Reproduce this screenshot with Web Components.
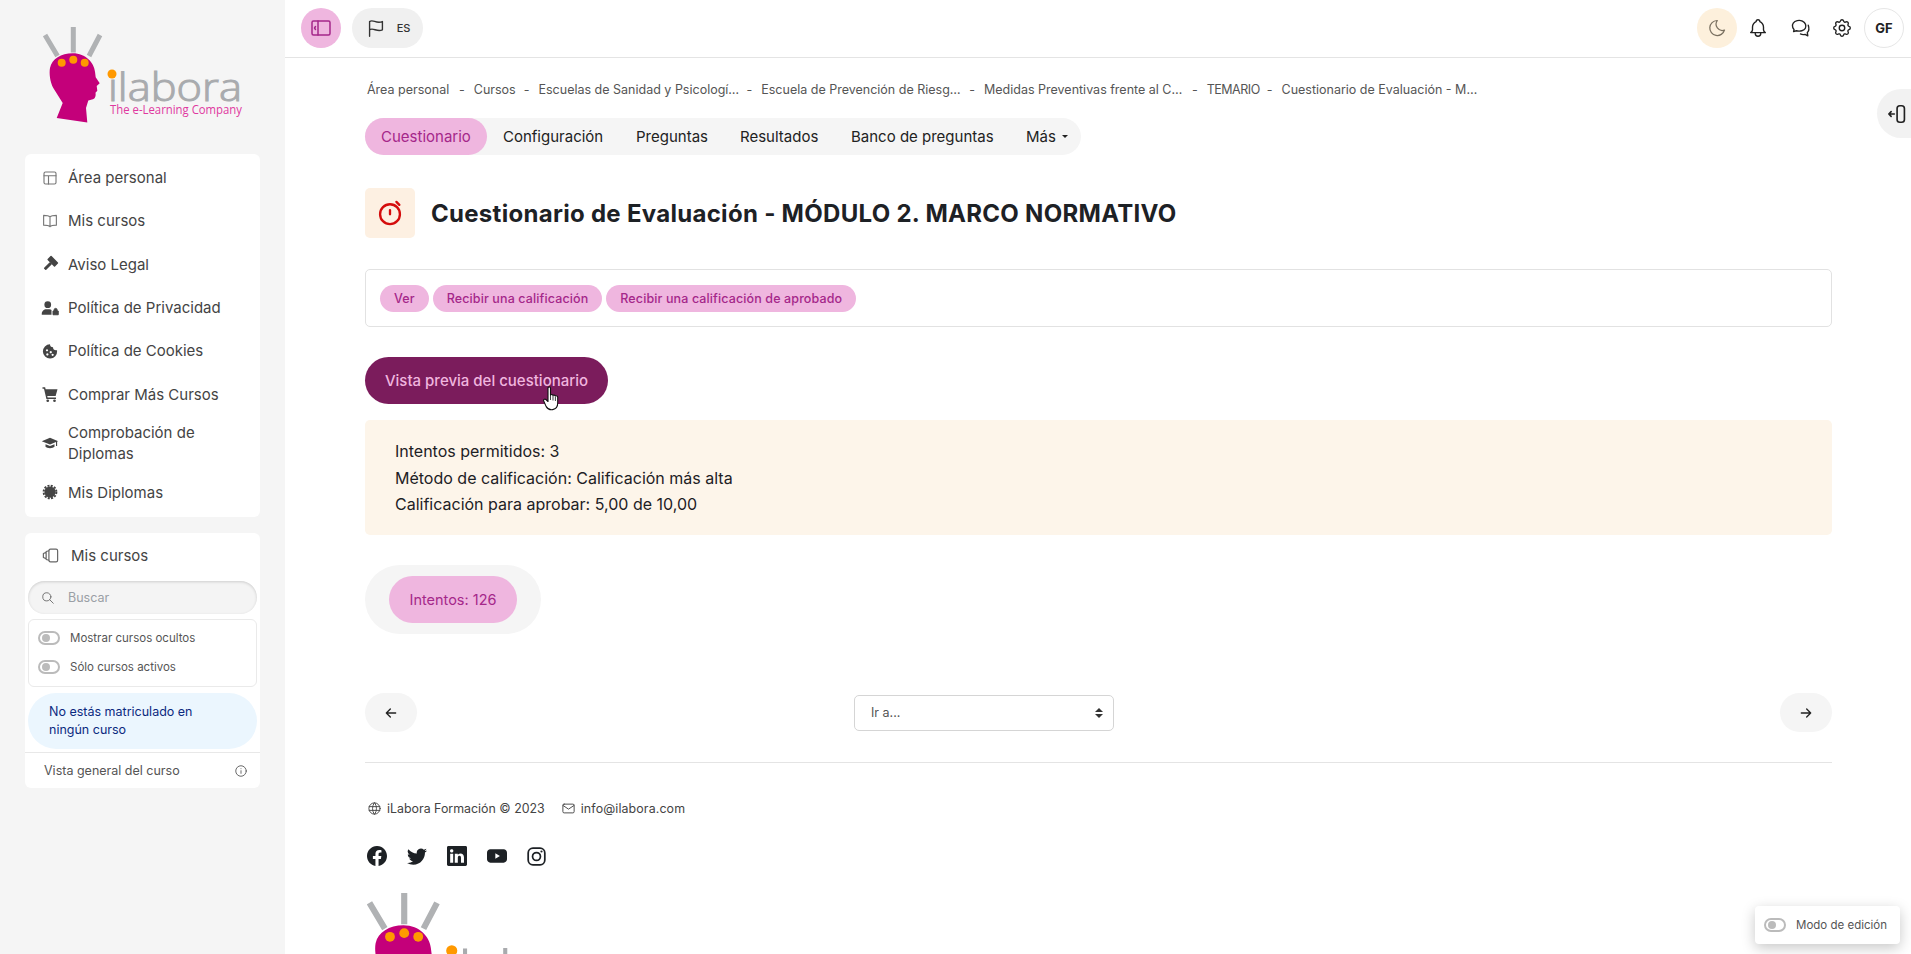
<!DOCTYPE html>
<html lang="es">
<head>
<meta charset="utf-8">
<title>Cuestionario de Evaluación</title>
<style>
	html, body {
		margin: 0;
		height: 100%;
		overflow: hidden;
		background: #fff;
		font-family: Inter, "Liberation Sans", sans-serif;
		color: #1d2125;
	}
</style>
</head>
<body>
<il-app></il-app>

<script>
const ICONS = {
	layout: '<g class="s"><rect x="4" y="4" width="16" height="16" rx="2"/><path d="M4 9h16M10 9v11"/></g>',
	book: '<g class="s"><path d="M12 6.5C10.5 5 8 4.5 3.5 4.5v13c4.5 0 7 .5 8.500 2 1.500-1.500 4-2 8.500-2v-13C16 4.500 13.500 5 12 6.500zM12 6.500v13"/></g>',
	gavel: '<g transform="rotate(45 12 12)"><rect x="5" y="3" width="14" height="7.500" rx="1"/><rect x="10" y="10" width="4" height="12" rx="1"/></g>',
	userlock: '<circle cx="9" cy="7.500" r="4.500"/><path d="M1 21v-1.500C1 16 4 13.500 7 13.500h4c1.500 0 2.500.5 3 1V21z"/><path d="M16 21v-5h7v5zM17.500 16v-1.500a2 2 0 0 1 4 0V16" stroke="currentColor" stroke-width="1.300"/>',
	cookie: '<path fill-rule="evenodd" d="M12 3a4 4 0 0 0 4 4 4 4 0 0 0 4 4c1 0 1.500 0 1.500 1A9.500 9.500 0 1 1 12 3zM8 9.500a1.500 1.500 0 1 0 .01 0zM8.500 15a1.500 1.500 0 1 0 .01 0zM13 12a1.500 1.500 0 1 0 .01 0zM15.500 15.500a1.500 1.500 0 1 0 .01 0z"/>',
	cart: '<path d="M2 3h3.500l.7 2.500H22l-2.500 9H8.300l.5 2H20v2H7.200L4 5H2z"/><circle cx="9" cy="21" r="1.800"/><circle cx="18" cy="21" r="1.800"/>',
	cap: '<path d="M12 5 1 9.500 12 14l8-3.300V16h1.500V10L23 9.500zM6 13.500V17c2 2.500 10 2.500 12 0v-3.500L12 16z"/>',
	cert: '<circle cx="12" cy="12" r="7.500"/><circle cx="12" cy="12" r="8.500" fill="none" stroke="currentColor" stroke-width="2.600" stroke-dasharray="2.700 1.750"/>',
	books: '<g class="s"><rect x="10" y="4" width="11" height="16" rx="2"/><path d="M10 6 6.500 7v10l3.500 1M6.500 8 3 9.500v5L6.500 16"/></g>',
	search: '<g class="s"><circle cx="10" cy="10" r="7"/><path d="m21 21-6-6"/></g>',
	info: '<g class="s"><circle cx="12" cy="12" r="9"/><path d="M12 8h.01M12 11.500V16"/></g>',
	sidebar: '<g class="s"><rect x="3" y="5" width="18" height="14" rx="1.500"/><path d="M9 5v14M6.500 10.500 5.500 12l1 1.500"/></g>',
	flag: '<g class="s"><path d="M5 21V5c4-3 7 3 14 0v9c-6 3-10-3-14 0"/></g>',
	moon: '<g class="s"><path d="M12 3h.4A7.500 7.500 0 0 0 21 14.500 9 9 0 1 1 12 3z"/></g>',
	bell: '<g class="s"><path d="M10 5a2 2 0 1 1 4 0 7 7 0 0 1 4 6v3a4 4 0 0 0 2 3H4a4 4 0 0 0 2-3v-3a7 7 0 0 1 4-6M9 17v1a3 3 0 0 0 6 0v-1"/></g>',
	chat: '<g class="s"><path d="M14 15c4-1 5-4 4-7s-5-5-9-4-6 4-5 7c.3 1.300 1 2 1.500 2.700L5 16l3-1c2 .6 4 .6 6 0z"/><path d="M21 9c1 3 1 6-1 8l.5 3.500-3-1.500c-2 .5-3.500.3-5-.5"/></g>',
	gear: '<g class="s"><path d="M10.300 4.300c.4-1.800 3-1.800 3.400 0a1.700 1.700 0 0 0 2.600 1.100c1.500-.9 3.300.8 2.400 2.400a1.700 1.700 0 0 0 1 2.500c1.800.4 1.800 3 0 3.400a1.700 1.700 0 0 0-1 2.600c.9 1.500-.9 3.300-2.400 2.400a1.700 1.700 0 0 0-2.600 1c-.4 1.800-3 1.800-3.400 0a1.700 1.700 0 0 0-2.600-1c-1.500.9-3.300-.9-2.400-2.400a1.700 1.700 0 0 0-1-2.600c-1.800-.4-1.800-3 0-3.400a1.700 1.700 0 0 0 1-2.500c-.9-1.600.9-3.300 2.400-2.400 1 .6 2.300.1 2.600-1.100z"/><circle cx="12" cy="12" r="3"/></g>',
	drawer: '<g class="s"><rect x="11" y="3" width="8" height="18" rx="3"/><path d="M8 12H2M4.500 9.500 2 12l2.500 2.500"/></g>',
	timer: '<g class="s"><circle cx="12" cy="13" r="8.500"/><path d="M12 9.500V13M17.500 2.500l2.500 2.500"/></g>',
	left: '<g class="s"><path d="M5 12h14M5 12l6 6M5 12l6-6"/></g>',
	right: '<g class="s"><path d="M5 12h14M19 12l-6 6M19 12l-6-6"/></g>',
	globe: '<g class="s"><circle cx="12" cy="12" r="9"/><path d="M3.600 9h16.800M3.600 15h16.800M11.500 3a17 17 0 0 0 0 18M12.500 3a17 17 0 0 1 0 18"/></g>',
	mail: '<g class="s"><rect x="3" y="5" width="18" height="14" rx="2"/><path d="m3 7 9 6 9-6"/></g>',
	facebook: '<path transform="scale(1.500)" d="M16 8.049c0-4.446-3.582-8.05-8-8.05C3.580 0-.002 3.603-.002 8.050c0 4.017 2.926 7.347 6.750 7.950v-5.625h-2.030V8.050H6.750V6.275c0-2.017 1.195-3.131 3.022-3.131.876 0 1.791.157 1.791.157v1.980h-1.009c-.993 0-1.303.621-1.303 1.258v1.510h2.218l-.354 2.326H9.250V16c3.824-.604 6.750-3.934 6.750-7.951z"/>',
	twitter: '<path transform="scale(1.500)" d="M5.026 15c6.038 0 9.341-5.003 9.341-9.334 0-.14 0-.282-.006-.422A6.685 6.685 0 0 0 16 3.542a6.658 6.658 0 0 1-1.889.518 3.301 3.301 0 0 0 1.447-1.817 6.533 6.533 0 0 1-2.087.793A3.286 3.286 0 0 0 7.875 6.030a9.325 9.325 0 0 1-6.767-3.429 3.289 3.289 0 0 0 1.018 4.382A3.323 3.323 0 0 1 .64 6.575v.045a3.288 3.288 0 0 0 2.632 3.218 3.203 3.203 0 0 1-.865.115 3.230 3.230 0 0 1-.614-.057 3.283 3.283 0 0 0 3.067 2.277A6.588 6.588 0 0 1 .78 13.580a6.320 6.320 0 0 1-.78-.045A9.344 9.344 0 0 0 5.026 15z"/>',
	linkedin: '<path transform="scale(1.500)" d="M0 1.146C0 .513.526 0 1.175 0h13.650C15.474 0 16 .513 16 1.146v13.708c0 .633-.526 1.146-1.175 1.146H1.175C.526 16 0 15.487 0 14.854V1.146zm4.943 12.248V6.169H2.542v7.225h2.401zm-1.200-8.212c.837 0 1.358-.554 1.358-1.248-.015-.709-.52-1.248-1.342-1.248-.822 0-1.359.54-1.359 1.248 0 .694.521 1.248 1.327 1.248h.016zm4.908 8.212V9.359c0-.216.016-.432.08-.586.173-.431.568-.878 1.232-.878.869 0 1.216.662 1.216 1.634v3.865h2.401V9.250c0-2.220-1.184-3.252-2.764-3.252-1.274 0-1.845.7-2.165 1.193v.025h-.016a5.540 5.540 0 0 1 .016-.025V6.169h-2.400c.03.678 0 7.225 0 7.225h2.400z"/>',
	youtube: '<path fill-rule="evenodd" d="M4 4h16c2.200 0 4 1.800 4 4v8c0 2.200-1.800 4-4 4H4c-2.200 0-4-1.800-4-4V8c0-2.200 1.800-4 4-4zm6 4.800v6.400l5.500-3.200z"/>',
	instagram: '<g class="s" style="stroke-width:2.200"><rect x="1.500" y="1.500" width="21" height="21" rx="6"/><circle cx="12" cy="12" r="5"/></g><circle cx="18.300" cy="5.700" r="1.400"/>'
};

class IlIcon extends HTMLElement {
	connectedCallback() {
		const size = this.getAttribute('size') || 18;
		const root = this.attachShadow({mode: 'open'});
		root.innerHTML = `
			<style>
				:host { display: inline-flex; width: ${size}px; height: ${size}px; flex: none; }
				svg { width: 100%; height: 100%; fill: currentColor; display: block; }
				.s { fill: none; stroke: currentColor; stroke-width: ${this.getAttribute('stroke') || 1.5}; stroke-linecap: round; stroke-linejoin: round; }
			</style>
			<svg viewBox="0 0 24 24">${ICONS[this.getAttribute('name')]}</svg>
		`;
	}
}

class IlLogo extends HTMLElement {
	connectedCallback() {
		const width = this.getAttribute('width') || 215;
		this.attachShadow({mode: 'open'}).innerHTML = `
			<style>
				:host { display: block; width: ${width}px; }
				svg { display: block; width: 100%; height: auto; }
			</style>
			<svg viewBox="0 0 215 97">
				<g stroke="#b0b2b4" stroke-width="5">
					<path d="M2 8 14.500 29M30.300 0v25.500M57 8 46 29"/>
				</g>
				<path fill="#c4007a" d="M29.700 26.300C43 26.300 51 36 52 44.700l.7 5.600 4 6-3 2.700.6 4.700-1.800 2c.6 3.500-.5 6.500-3.500 6.800l-3.700 1-2.300 7.600 1.300 14.400-30.600-4.400 6-15-9.400-15C7 55 6 46 7 41 9 32 18 26.300 29.700 26.300z"/>
				<g fill="#ff9900">
					<circle cx="18.700" cy="35.700" r="4"/>
					<circle cx="30.300" cy="32.700" r="4"/>
					<circle cx="41.700" cy="35.700" r="4"/>
				</g>
				<text x="65" y="74" font-family="'Open Sans', sans-serif" font-weight="300" font-size="38" fill="#a9abae" stroke="#a9abae" stroke-width="1" textLength="134" lengthAdjust="spacingAndGlyphs">ilabora</text>
				<circle cx="69" cy="47" r="4.500" fill="#ff9900"/>
				<text x="67" y="87" font-family="'Open Sans', sans-serif" font-size="12" fill="#e0389f" textLength="132" lengthAdjust="spacingAndGlyphs">The e-Learning Company</text>
			</svg>
		`;
	}
}

class IlSwitch extends HTMLElement {
	connectedCallback() {
		this.attachShadow({mode: 'open'}).innerHTML = `
			<style>
				:host { display: inline-flex; align-items: center; gap: 10px; font-size: 11.5px; color: #555; }
				.track { width: 22px; height: 14px; box-sizing: border-box; border: 2px solid #bbb; border-radius: 8px; display: flex; align-items: center; padding-left: 2px; }
				.track::before { content: ''; width: 8px; height: 8px; border-radius: 50%; background: #bbb; }
			</style>
			<span class="track"></span><slot></slot>
		`;
	}
}

class IlNavItem extends HTMLElement {
	connectedCallback() {
		this.attachShadow({mode: 'open'}).innerHTML = `
			<style>
				:host { display: flex; align-items: center; gap: 9px; min-height: 43.300px; padding: 6.500px 16px; box-sizing: border-box; font-size: 15px; line-height: 21px; color: #444; }
				il-icon { color: ${this.hasAttribute('outline') ? '#777' : '#444'}; }
			</style>
			<il-icon name="${this.getAttribute('icon')}" size="18" stroke="1.500"></il-icon>
			<span><slot></slot></span>
		`;
	}
}

class IlCoursesCard extends HTMLElement {
	connectedCallback() {
		this.attachShadow({mode: 'open'}).innerHTML = `
			<style>
				:host { display: block; background: #fff; border-radius: 6px; }
				.head { display: flex; align-items: center; gap: 11px; height: 48px; box-sizing: border-box; padding: 0 16px 3px; font-size: 15px; color: #444; }
				.head il-icon { color: #666; }
				.body { padding: 0 3px; display: flex; flex-direction: column; }
				.search { display: flex; align-items: center; gap: 13px; height: 33px; padding: 0 13px; border-radius: 17px; background: #f4f4f4; box-shadow: inset 0 1px 3px rgba(0,0,0,.16); font-size: 12.500px; color: #9a9fa5; }
				.search il-icon { color: #666; }
				.filters { margin-top: 5px; height: 68px; box-sizing: border-box; border: 1px solid #eaeaea; border-radius: 6px; padding: 0 9px 2px; display: flex; flex-direction: column; justify-content: center; gap: 15px; }
				.alert { margin-top: 6px; height: 56px; box-sizing: border-box; padding: 10px 21px; border-radius: 28px; background: #ebf6fe; color: #0b2a80; font-size: 12.500px; line-height: 18px; }
				.foot { margin-top: 3px; border-top: 1px solid #e8e8e8; height: 35px; display: flex; align-items: center; justify-content: space-between; padding: 0 12px 0 19px; font-size: 12.500px; color: #555; }
			</style>
			<div class="head"><il-icon name="books" size="19"></il-icon>Mis cursos</div>
			<div class="body">
				<div class="search"><il-icon name="search" size="14"></il-icon>Buscar</div>
				<div class="filters">
					<il-switch>Mostrar cursos ocultos</il-switch>
					<il-switch>Sólo cursos activos</il-switch>
				</div>
				<div class="alert">No estás matriculado en ningún curso</div>
			</div>
			<div class="foot">Vista general del curso<il-icon name="info" size="14"></il-icon></div>
		`;
	}
}

class IlSidebar extends HTMLElement {
	connectedCallback() {
		this.attachShadow({mode: 'open'}).innerHTML = `
			<style>
				:host { display: flex; flex-direction: column; padding: 27px 25px 0; box-sizing: border-box; background: #f5f5f5; height: 100%; }
				il-logo { margin-left: 18px; }
				.menu { margin-top: 30px; background: #fff; border-radius: 6px; padding: 2px 0 3px; }
				il-courses-card { margin-top: 16px; }
			</style>
			<il-logo width="215"></il-logo>
			<div class="menu">
				<il-nav-item icon="layout" outline>Área personal</il-nav-item>
				<il-nav-item icon="book" outline>Mis cursos</il-nav-item>
				<il-nav-item icon="gavel">Aviso Legal</il-nav-item>
				<il-nav-item icon="userlock">Política de Privacidad</il-nav-item>
				<il-nav-item icon="cookie">Política de Cookies</il-nav-item>
				<il-nav-item icon="cart">Comprar Más Cursos</il-nav-item>
				<il-nav-item icon="cap">Comprobación de Diplomas</il-nav-item>
				<il-nav-item icon="cert">Mis Diplomas</il-nav-item>
			</div>
			<il-courses-card></il-courses-card>
		`;
	}
}

class IlTopbar extends HTMLElement {
	connectedCallback() {
		this.attachShadow({mode: 'open'}).innerHTML = `
			<style>
				:host { display: flex; align-items: center; height: 58px; box-sizing: border-box; border-bottom: 1px solid #e4e4e4; padding: 0 7px 1px 16px; }
				.btn { width: 40px; height: 40px; border-radius: 50%; display: flex; align-items: center; justify-content: center; color: #222; flex: none; }
				.toggle { background: #efb6df; color: #a5278a; }
				.lang { margin-left: 11px; width: 71px; height: 40px; border-radius: 20px; background: #f0f0f0; display: flex; align-items: center; justify-content: center; gap: 10px; font-size: 11px; font-weight: 500; color: #333; }
				.spacer { flex: 1; }
				.moon { background: #fdf0dc; color: #7a7060; }
				.icon { width: 42px; height: 40px; display: flex; align-items: center; justify-content: center; color: #222; }
				.avatar { border: 1px solid #e6e6e6; box-sizing: border-box; font-size: 13px; font-weight: 700; margin-left: 1px; }
			</style>
			<span class="btn toggle"><il-icon name="sidebar" size="24"></il-icon></span>
			<span class="lang"><il-icon name="flag" size="22"></il-icon>ES</span>
			<span class="spacer"></span>
			<span class="btn moon"><il-icon name="moon" size="20"></il-icon></span>
			<span class="icon"><il-icon name="bell" size="22"></il-icon></span>
			<span class="icon"><il-icon name="chat" size="22"></il-icon></span>
			<span class="icon"><il-icon name="gear" size="22"></il-icon></span>
			<span class="btn avatar">GF</span>
		`;
	}
}

class IlBreadcrumb extends HTMLElement {
	connectedCallback() {
		const items = ['Área personal', 'Cursos', 'Escuelas de Sanidad y Psicologí…', 'Escuela de Prevención de Riesg…', 'Medidas Preventivas frente al C…', 'TEMARIO', 'Cuestionario de Evaluación - M…'];
		const widths = [83, 41, 199, 199, 199, 51, 196];
		this.attachShadow({mode: 'open'}).innerHTML = `
			<style>
				:host { display: flex; align-items: center; gap: 9px; height: 18px; padding-left: 2px; font-size: 12.500px; color: #555; white-space: nowrap; }
				span { display: inline-block; }
				.caps { letter-spacing: -.5px; }
			</style>
			${items.map((item, i) => `${i ? '<span>-</span>' : ''}<span ${item === 'TEMARIO' ? 'class="caps"' : ''} style="width:${widths[i]}px">${item}</span>`).join('')}
		`;
	}
}

class IlTabs extends HTMLElement {
	connectedCallback() {
		this.attachShadow({mode: 'open'}).innerHTML = `
			<style>
				:host { display: inline-flex; align-self: flex-start; height: 37px; border-radius: 19px; background: #f5f5f5; font-size: 15px; color: #222; }
				span { display: flex; align-items: center; padding: 0 16px; border-radius: 19px; white-space: nowrap; }
				.active { background: #efb6df; color: #a5278a; }
				.more { width: 39px; }
				.more::after { content: ''; margin-left: 6px; border: 3px solid transparent; border-top-color: #222; border-bottom: 0; }
			</style>
			<span class="active" style="width:90px">Cuestionario</span>
			<span style="width:101px">Configuración</span>
			<span style="width:72px">Preguntas</span>
			<span style="width:79px">Resultados</span>
			<span style="width:143px">Banco de preguntas</span>
			<span class="more">Más</span>
		`;
	}
}

class IlHeading extends HTMLElement {
	connectedCallback() {
		this.attachShadow({mode: 'open'}).innerHTML = `
			<style>
				:host { display: flex; align-items: center; gap: 16px; height: 50px; }
				.icon { width: 50px; height: 50px; border-radius: 5px; background: #fdf0e2; color: #d40c0c; display: flex; align-items: center; justify-content: center; }
				h1 { margin: 0; font-size: 24px; font-weight: 700; letter-spacing: .29px; color: #1d2125; white-space: nowrap; }
			</style>
			<span class="icon"><il-icon name="timer" size="28" stroke="2"></il-icon></span>
			<h1><slot></slot></h1>
		`;
	}
}

class IlCompletion extends HTMLElement {
	connectedCallback() {
		this.attachShadow({mode: 'open'}).innerHTML = `
			<style>
				:host { display: flex; align-items: center; gap: 4px; height: 58px; box-sizing: border-box; border: 1px solid #e2e2e2; border-radius: 5px; padding: 0 14px; }
				span { display: flex; align-items: center; height: 27px; padding: 0 14px; border-radius: 14px; background: #efb6df; color: #a5278a; font-size: 12.500px; font-weight: 500; letter-spacing: .12px; white-space: nowrap; }
			</style>
			<span>Ver</span>
			<span>Recibir una calificación</span>
			<span>Recibir una calificación de aprobado</span>
		`;
	}
}

class IlPreviewButton extends HTMLElement {
	connectedCallback() {
		this.attachShadow({mode: 'open'}).innerHTML = `
			<style>
				:host { display: inline-flex; align-self: flex-start; align-items: center; justify-content: center; position: relative; width: 243px; height: 47px; border-radius: 24px; background: #7b1c5c; color: #f0b6df; font-size: 15px; font-weight: 500; white-space: nowrap; }
				svg { position: absolute; left: 178px; top: 29px; width: 17px; height: 25px; }
			</style>
			<slot></slot>
			<svg viewBox="0 0 17 25">
				<path fill="#fff" stroke="#111" stroke-width="1.100" stroke-linejoin="round" d="M5 2c0-1.500 2.500-1.500 2.500 0v7c1-1 2.200-.5 2.500.5.800-.8 2-.4 2.300.6.900-.6 2.200-.2 2.400 1v6c0 3.500-1.500 6-5 6.500-3 .4-5-.5-6.500-3L.7 15c-.6-1.300 1-2.500 2.200-1.500L5 15.500z"/>
				<path stroke="#111" stroke-width=".8" d="M7.500 9v5M10 10v4.500M12.400 11v4"/>
			</svg>
		`;
	}
}

class IlInfoBox extends HTMLElement {
	connectedCallback() {
		this.attachShadow({mode: 'open'}).innerHTML = `
			<style>
				:host { display: block; height: 115px; box-sizing: border-box; padding: 18px 30px 0; border-radius: 5px; background: #fdf5ea; font-size: 16px; line-height: 26.500px; color: #1d2125; }
			</style>
			<slot></slot>
		`;
	}
}

class IlAttempts extends HTMLElement {
	connectedCallback() {
		this.attachShadow({mode: 'open'}).innerHTML = `
			<style>
				:host { display: inline-flex; align-self: flex-start; align-items: center; justify-content: center; width: 176px; height: 69px; border-radius: 35px; background: #f5f5f5; }
				span { display: flex; align-items: center; justify-content: center; width: 128px; height: 47px; border-radius: 24px; background: #efb6df; color: #a5278a; font-size: 14.500px; }
			</style>
			<span><slot></slot></span>
		`;
	}
}

class IlPager extends HTMLElement {
	connectedCallback() {
		this.attachShadow({mode: 'open'}).innerHTML = `
			<style>
				:host { display: flex; align-items: center; justify-content: space-between; height: 39px; }
				.arrow { width: 52px; height: 39px; border-radius: 20px; background: #f5f5f5; display: flex; align-items: center; justify-content: center; color: #222; }
				.select { width: 260px; height: 36px; box-sizing: border-box; border: 1px solid #d5d5d5; border-radius: 5px; padding: 0 10px 0 16px; display: flex; align-items: center; justify-content: space-between; font-size: 12.500px; color: #555; margin-right: 229px; }
				.carets { display: flex; flex-direction: column; gap: 2px; }
				.carets i { display: block; border: 4px solid transparent; }
				.carets i:first-child { border-top: 0; border-bottom-color: #333; }
				.carets i:last-child { border-bottom: 0; border-top-color: #333; }
			</style>
			<span class="arrow"><il-icon name="left" size="16" stroke="2"></il-icon></span>
			<span class="select">Ir a...<span class="carets"><i></i><i></i></span></span>
			<span class="arrow"><il-icon name="right" size="16" stroke="2"></il-icon></span>
		`;
	}
}

class IlFooter extends HTMLElement {
	connectedCallback() {
		this.attachShadow({mode: 'open'}).innerHTML = `
			<style>
				:host { display: block; border-top: 1px solid #e4e4e4; margin-top: 30px; padding-top: 36px; }
				.line { display: flex; align-items: center; height: 18px; font-size: 12.400px; color: #444; padding-left: 2px; }
				.line span { display: flex; align-items: center; gap: 5px; }
				.line span + span { margin-left: 16px; }
				.mail { letter-spacing: .12px; }
				.social { display: flex; align-items: center; gap: 20px; margin-top: 29px; padding-left: 2px; color: #1d2125; }
				il-logo { margin-top: 27px; margin-left: 2px; }
			</style>
			<div class="line">
				<span><il-icon name="globe" size="15"></il-icon>iLabora Formación © 2023</span>
				<span class="mail"><il-icon name="mail" size="15"></il-icon>info@ilabora.com</span>
			</div>
			<div class="social">
				<il-icon name="facebook" size="20"></il-icon>
				<il-icon name="twitter" size="20"></il-icon>
				<il-icon name="linkedin" size="20"></il-icon>
				<il-icon name="youtube" size="20"></il-icon>
				<il-icon name="instagram" size="19"></il-icon>
			</div>
			<il-logo width="264"></il-logo>
		`;
	}
}

class IlApp extends HTMLElement {
	connectedCallback() {
		this.attachShadow({mode: 'open'}).innerHTML = `
			<style>
				:host { display: grid; grid-template-columns: 285px 1fr; height: 100vh; overflow: hidden; position: relative; }
				.main { min-width: 0; overflow: hidden; }
				.content { display: flex; flex-direction: column; padding: 0 79px 0 80px; }
				il-breadcrumb { margin-top: 22px; }
				il-tabs { margin-top: 20px; }
				il-heading { margin-top: 33px; }
				il-completion { margin-top: 31px; }
				il-preview-button { margin-top: 30px; }
				il-info-box { margin-top: 16px; }
				il-attempts { margin-top: 30px; }
				il-pager { margin-top: 59px; }
				.drawer { position: absolute; right: 0; top: 89px; width: 34px; height: 49px; box-sizing: border-box; padding-left: 7px; border-radius: 25px 0 0 25px; background: #f2f2f2; display: flex; align-items: center; justify-content: center; color: #222; }
				.edit { position: absolute; right: 11px; bottom: 10px; width: 145px; height: 38px; box-sizing: border-box; padding-left: 9px; display: flex; align-items: center; background: #fff; border-radius: 4px; box-shadow: 0 4px 14px rgba(0,0,0,.22); }
			</style>
			<il-sidebar></il-sidebar>
			<div class="main">
				<il-topbar></il-topbar>
				<div class="content">
					<il-breadcrumb></il-breadcrumb>
					<il-tabs></il-tabs>
					<il-heading>Cuestionario de Evaluación - MÓDULO 2. MARCO NORMATIVO</il-heading>
					<il-completion></il-completion>
					<il-preview-button>Vista previa del cuestionario</il-preview-button>
					<il-info-box>
						<div>Intentos permitidos: 3</div>
						<div>Método de calificación: Calificación más alta</div>
						<div>Calificación para aprobar: 5,00 de 10,00</div>
					</il-info-box>
					<il-attempts>Intentos: 126</il-attempts>
					<il-pager></il-pager>
					<il-footer></il-footer>
				</div>
			</div>
			<span class="drawer"><il-icon name="drawer" size="22" stroke="1.800"></il-icon></span>
			<span class="edit"><il-switch>Modo de edición</il-switch></span>
		`;
	}
}

customElements.define('il-icon', IlIcon);
customElements.define('il-logo', IlLogo);
customElements.define('il-switch', IlSwitch);
customElements.define('il-nav-item', IlNavItem);
customElements.define('il-courses-card', IlCoursesCard);
customElements.define('il-sidebar', IlSidebar);
customElements.define('il-topbar', IlTopbar);
customElements.define('il-breadcrumb', IlBreadcrumb);
customElements.define('il-tabs', IlTabs);
customElements.define('il-heading', IlHeading);
customElements.define('il-completion', IlCompletion);
customElements.define('il-preview-button', IlPreviewButton);
customElements.define('il-info-box', IlInfoBox);
customElements.define('il-attempts', IlAttempts);
customElements.define('il-pager', IlPager);
customElements.define('il-footer', IlFooter);
customElements.define('il-app', IlApp);
</script>
</body>
</html>
